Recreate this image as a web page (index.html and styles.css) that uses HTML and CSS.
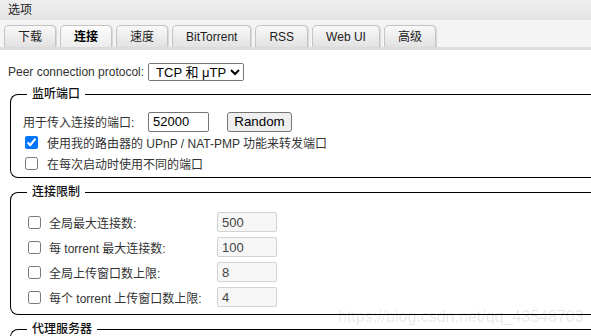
FILE: index.html
```html
<!DOCTYPE html>
<html lang="zh-CN">
<head>
<meta charset="utf-8">
<title>选项</title>
<link rel="stylesheet" href="styles.css">
</head>
<body>
<div class="titlebar">选项</div>
<div class="tabstrip">
  <ul class="tabs">
    <li class="tab">下载</li>
    <li class="tab active">连接</li>
    <li class="tab">速度</li>
    <li class="tab">BitTorrent</li>
    <li class="tab">RSS</li>
    <li class="tab">Web UI</li>
    <li class="tab">高级</li>
  </ul>
</div>
<div class="content">
  <div class="proto-row">
    <label class="proto-label">Peer connection protocol:</label>
    <select class="proto-select"><option>TCP 和 μTP</option></select>
  </div>

  <fieldset class="group listen">
    <legend>监听端口</legend>
    <div class="row">
      <label class="port-label">用于传入连接的端口:</label>
      <input class="port-input" type="text" value="52000">
      <button class="btn">Random</button>
    </div>
    <div class="row check-row">
      <input class="cb" type="checkbox" checked>
      <label>使用我的路由器的 UPnP / NAT-PMP 功能来转发端口</label>
    </div>
    <div class="row check-row">
      <input class="cb" type="checkbox">
      <label>在每次启动时使用不同的端口</label>
    </div>
  </fieldset>

  <fieldset class="group limits">
    <legend>连接限制</legend>
    <div class="limit-row">
      <input class="cb" type="checkbox">
      <label>全局最大连接数:</label>
      <input class="limit-input" type="text" value="500" disabled>
    </div>
    <div class="limit-row">
      <input class="cb" type="checkbox">
      <label>每 torrent 最大连接数:</label>
      <input class="limit-input" type="text" value="100" disabled>
    </div>
    <div class="limit-row">
      <input class="cb" type="checkbox">
      <label>全局上传窗口数上限:</label>
      <input class="limit-input" type="text" value="8" disabled>
    </div>
    <div class="limit-row">
      <input class="cb" type="checkbox">
      <label>每个 torrent 上传窗口数上限:</label>
      <input class="limit-input" type="text" value="4" disabled>
    </div>
  </fieldset>

  <fieldset class="group proxy">
    <legend>代理服务器</legend>
  </fieldset>
</div>
<div class="watermark">https://blog.csdn.net/qq_43548703</div>
</body>
</html>
```

FILE: styles.css
```css
html, body {
  margin: 0;
  padding: 0;
  overflow: hidden;
  background: #fff;
}
body {
  font-family: "Liberation Sans", "Noto Sans CJK SC", sans-serif;
  font-size: 12px;
  color: #333;
  position: relative;
  height: 336px;
}

.titlebar {
  height: 20px;
  line-height: 20px;
  padding-left: 8px;
  background: linear-gradient(#efefef, #e4e4e4);
  color: #222;
  font-size: 12px;
}

.tabstrip {
  background: #f4f4f4;
  padding: 5px 0 0 4px;
  border-bottom: 3px solid #dedede;
}
.tabs {
  list-style: none;
  margin: 0;
  padding: 0;
  display: flex;
  gap: 4px;
  height: 22px;
}
.tab {
  display: flex;
  align-items: center;
  padding: 0 13px;
  border: 1px solid #c4c4c4;
  border-bottom: none;
  border-radius: 5px 5px 0 0;
  background: linear-gradient(#f8f8f8, #e2e2e2);
  box-shadow: 1px 0 1px rgba(0, 0, 0, 0.12);
  color: #222;
  font-size: 12px;
  line-height: 14px;
}
.tab.active {
  background: linear-gradient(#fdfdfd, #ececec);
  color: #000;
  font-weight: 600;
}

.content {
  padding: 0 0 0 8px;
}

.proto-row {
  display: flex;
  align-items: center;
  height: 20px;
  margin-top: 12px;
}
.proto-label {
  margin-right: 4px;
}
.proto-select {
  width: 96px;
  height: 18px;
  font-family: "Liberation Sans", "Noto Sans CJK SC", sans-serif;
  font-size: 13px;
  color: #000;
  border: 1px solid #767676;
  border-radius: 2px;
  padding: 0 0 0 3px;
  background: #fff;
}

.group {
  border: 1px solid #000;
  border-right: none;
  border-radius: 8px 0 0 8px;
  margin: 4px 0 0 2px;
  padding: 9px 12px 3px;
  min-width: 0;
}
.group + .group {
  margin-top: 6px;
}
.group legend {
  font-size: 12px;
  line-height: 16px;
  padding: 0 5px;
  margin-left: 4px;
  color: #111;
  font-weight: 500;
}

.row {
  display: flex;
  align-items: center;
  height: 21px;
}
.port-label {
  width: 125px;
}
.port-input {
  box-sizing: border-box;
  width: 61px;
  height: 20px;
  border: 1px solid #767676;
  border-radius: 2px;
  padding: 0 4px;
  font-family: "Liberation Sans", sans-serif;
  font-size: 13px;
  color: #000;
}
.btn {
  box-sizing: border-box;
  margin-left: 18px;
  width: 65px;
  height: 20px;
  border: 1px solid #767676;
  border-radius: 3px;
  background: #efefef;
  font-family: "Liberation Sans", sans-serif;
  font-size: 13.33px;
  color: #000;
  padding: 0;
}

.cb {
  width: 13px;
  height: 13px;
  margin: 0;
}
.check-row .cb {
  margin: 0 9px 0 2px;
}

.limits {
  padding: 12px 12px 7px;
}
.limit-row {
  display: grid;
  grid-template-columns: 26px 168px 60px;
  align-items: center;
  height: 20px;
}
.limit-row + .limit-row {
  margin-top: 5px;
}
.limit-row .cb {
  margin-left: 5px;
}
.limit-input {
  box-sizing: border-box;
  width: 60px;
  height: 20px;
  border: 1px solid #d3d3d3;
  border-radius: 2px;
  background: #f6f6f6;
  padding: 0 4px;
  font-family: "Liberation Sans", sans-serif;
  font-size: 13px;
  color: #444;
}

.proxy {
  padding: 0 12px;
  border-bottom: none;
  border-radius: 8px 0 0 0;
}

.watermark {
  position: absolute;
  left: 338px;
  top: 308px;
  font-family: "Liberation Sans", sans-serif;
  font-size: 16px;
  color: rgba(0, 0, 0, 0.1);
  white-space: nowrap;
  pointer-events: none;
}
```
